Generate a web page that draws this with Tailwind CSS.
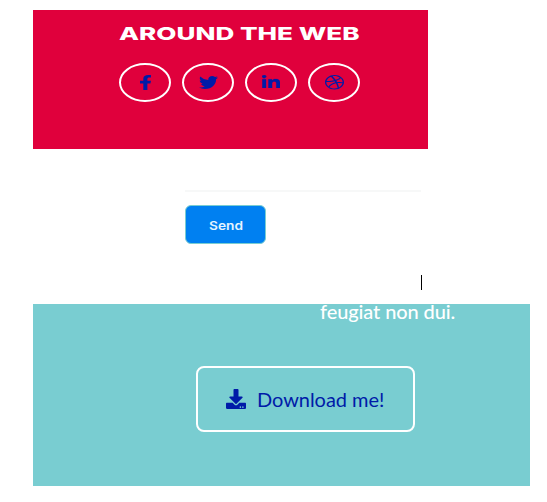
<!DOCTYPE html>
<html lang="en">
<head>
<meta charset="utf-8">
<title>Around the Web</title>
<script src="https://cdn.jsdelivr.net/npm/@tailwindcss/browser@4"></script>
</head>
<body class="h-[502px] w-[547px] overflow-hidden bg-white pt-[10px] pl-[33px]">
<section class="h-[139px] w-[395px] bg-[#e0003c] pt-[12px] pl-[86px]">
  <h4>
    <svg class="block h-[24px] w-[242px] overflow-visible font-['Inter',sans-serif] text-[17.5px] font-extrabold" fill="#fff"><text x="0" y="18.2" textLength="240.5" lengthAdjust="spacingAndGlyphs">AROUND THE WEB</text></svg>
  </h4>
  <div class="mt-[17px] flex gap-[11px] text-[#001ba8]">
    <a class="flex h-[39px] w-[52px] items-center justify-center rounded-[50%] border-2 border-white">
      <svg class="h-[15px] w-[11px]" viewBox="22.89 0 270.47 512" preserveAspectRatio="none" fill="currentColor"><path d="M279.14 288l14.22-92.66h-88.91v-60.13c0-25.35 12.42-50.06 52.24-50.06h40.42V6.26S260.43 0 225.36 0c-73.22 0-121.08 44.38-121.08 124.72v70.62H22.89V288h81.39v224h100.17V288z"/></svg>
    </a>
    <a class="flex h-[39px] w-[52px] items-center justify-center rounded-[50%] border-2 border-white">
      <svg class="h-[13px] w-[19px]" viewBox="0 48 512 416" preserveAspectRatio="none" fill="currentColor"><path d="M459.37 151.716c.325 4.548.325 9.097.325 13.645 0 138.72-105.583 298.558-298.558 298.558-59.452 0-114.68-17.219-161.137-47.106 8.447.974 16.568 1.299 25.34 1.299 49.055 0 94.213-16.568 130.274-44.832-46.132-.975-84.792-31.188-98.112-72.772 6.498.974 12.995 1.624 19.818 1.624 9.421 0 18.843-1.3 27.614-3.573-48.081-9.747-84.143-51.98-84.143-102.985v-1.299c13.969 7.797 30.214 12.67 47.431 13.319-28.264-18.843-46.781-51.005-46.781-87.391 0-19.492 5.197-37.36 14.294-52.954 51.655 63.675 129.3 105.258 216.365 109.807-1.624-7.797-2.599-15.918-2.599-24.04 0-57.828 46.782-104.934 104.934-104.934 30.213 0 57.502 12.67 76.67 33.137 23.715-4.548 46.456-13.32 66.599-25.34-7.798 24.366-24.366 44.833-46.132 57.827 21.117-2.273 41.584-8.122 60.426-16.243-14.292 20.791-32.161 39.308-52.628 54.253z"/></svg>
    </a>
    <a class="flex h-[39px] w-[52px] items-center justify-center rounded-[50%] border-2 border-white">
      <svg class="mb-[2px] h-[13px] w-[18px]" viewBox="0 32 448 448" preserveAspectRatio="none" fill="currentColor" stroke="currentColor" stroke-width="8"><path d="M100.28 480H7.4V180.9h92.88zM53.79 140.1C24.09 140.1 0 115.5 0 85.8a53.79 53.79 0 0 1 107.58 0c0 29.7-24.1 54.3-53.79 54.3zM447.9 480h-92.68V334.4c0-34.7-.7-79.2-48.29-79.2-48.29 0-55.69 37.7-55.69 76.7V480h-92.78V180.9h89.08v40.8h1.3c12.4-23.5 42.69-48.3 87.88-48.3 94 0 111.28 61.9 111.28 142.3V480z"/></svg>
    </a>
    <a class="flex h-[39px] w-[52px] items-center justify-center rounded-[50%] border-2 border-white">
      <svg class="h-[14.5px] w-[19px]" viewBox="8 8 496 496" preserveAspectRatio="none" fill="currentColor"><path d="M256 8C119.252 8 8 119.252 8 256s111.252 248 248 248 248-111.252 248-248S392.748 8 256 8zm163.97 114.366c29.503 36.046 47.369 81.957 47.835 131.955-6.984-1.477-77.018-15.682-147.502-6.818-5.752-14.041-11.181-26.393-18.617-41.614 78.321-31.977 113.818-77.482 118.284-83.523zM396.421 97.87c-3.81 5.427-35.697 48.286-111.021 76.519-34.712-63.776-73.185-116.168-79.04-124.008 67.176-16.193 137.966 1.27 190.061 47.489zm-230.48-33.25c5.585 7.659 43.438 60.116 78.537 122.509-99.087 26.313-186.36 25.934-195.834 25.809C62.38 147.205 106.678 92.573 165.941 64.62zM44.17 256.323c0-2.166.043-4.322.108-6.473 9.268.19 111.92 1.513 217.706-30.146 6.064 11.868 11.857 23.915 17.174 35.949-76.599 21.575-146.194 83.527-180.531 142.306C64.794 360.405 44.17 310.73 44.17 256.323zm81.807 167.113c22.127-45.233 82.178-103.622 167.579-132.756 29.74 77.283 42.039 142.053 45.189 160.638-68.112 29.013-150.015 21.053-212.768-27.882zm248.38 8.489c-2.171-12.886-13.446-74.897-41.152-151.033 66.38-10.626 124.7 6.768 131.947 9.055-9.442 58.941-43.273 109.844-90.795 141.978z"/></svg>
    </a>
  </div>
</section>

<section class="h-[155px] pt-[41px] pl-[152px]">
  <div class="h-[2px] w-[236px] bg-[#f7f8f8]"></div>
  <div class="flex h-[101px] pt-[13px]">
    <button class="h-[39px] w-[81px] rounded-[6px] border border-[#79cdd1] bg-[#0080f1] pl-[23px]">
      <svg class="block h-[20px] w-[35px] overflow-visible font-['Inter',sans-serif] text-[12px] font-semibold" fill="#e6f4ff"><text x="0" y="14.5" textLength="34" lengthAdjust="spacingAndGlyphs">Send</text></svg>
    </button>
    <span class="mt-[70px] ml-[155px] h-[15px] w-px bg-black"></span>
  </div>
</section>

<section class="h-[182px] w-[497px] bg-[#79cdd1] font-['Lato',sans-serif]">
  <p class="h-[62px] pl-[287px] text-[20px] leading-[15px] font-medium tracking-[-0.1px] whitespace-nowrap text-white">feugiat non dui.</p>
  <a class="ml-[163px] flex h-[66px] w-[219px] items-center rounded-[8px] border-2 border-white pl-[28px] text-[20px] tracking-[-0.05px] whitespace-nowrap text-[#001ba8]">
    <svg class="mr-[11px] h-[20px] w-[20px]" viewBox="0 0 512 512" fill="currentColor"><path d="M216 0h80c13.300 0 24 10.700 24 24v168h87.700c17.800 0 26.700 21.500 14.100 34.100L269.700 378.300c-7.500 7.500-19.800 7.500-27.300 0L90.100 226.100c-12.600-12.600-3.700-34.100 14.100-34.100H192V24c0-13.300 10.700-24 24-24zm296 376v112c0 13.300-10.700 24-24 24H24c-13.300 0-24-10.700-24-24V376c0-13.300 10.700-24 24-24h146.700l49 49c20.100 20.100 52.500 20.100 72.600 0l49-49H488c13.300 0 24 10.700 24 24zm-124 88c0-11-9-20-20-20s-20 9-20 20 9 20 20 20 20-9 20-20zm64 0c0-11-9-20-20-20s-20 9-20 20 9 20 20 20 20-9 20-20z"/></svg>
    <span>Download me!</span>
  </a>
</section>
</body>
</html>
